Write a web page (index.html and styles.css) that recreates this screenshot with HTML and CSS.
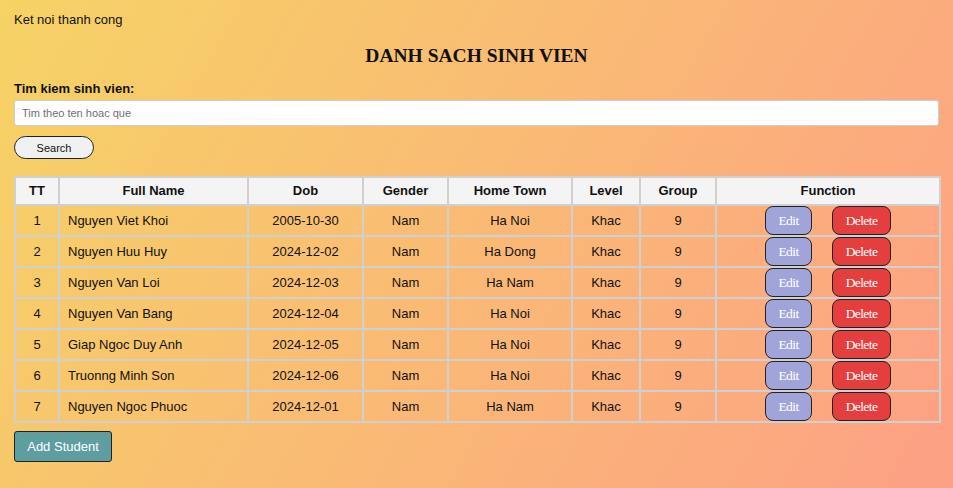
FILE: index.html
```html
<!DOCTYPE html>
<html lang="vi">
<head>
<meta charset="utf-8">
<title>Danh sach sinh vien</title>
<link rel="stylesheet" href="styles.css">
</head>
<body>
<div class="status">Ket noi thanh cong</div>
<h2 class="title">DANH SACH SINH VIEN</h2>
<form class="search">
  <label class="search-label" for="q">Tim kiem sinh vien:</label>
  <input class="search-input" id="q" type="text" placeholder="Tim theo ten hoac que">
  <button class="search-btn" type="button">Search</button>
</form>
<table class="students">
  <colgroup>
    <col class="c-tt"><col class="c-name"><col class="c-dob"><col class="c-gender"><col class="c-town"><col class="c-level"><col class="c-group"><col class="c-func">
  </colgroup>
  <thead>
    <tr><th>TT</th><th>Full Name</th><th>Dob</th><th>Gender</th><th>Home Town</th><th>Level</th><th>Group</th><th>Function</th></tr>
  </thead>
  <tbody>
    <tr><td>1</td><td class="name">Nguyen Viet Khoi</td><td>2005-10-30</td><td>Nam</td><td>Ha Noi</td><td>Khac</td><td>9</td><td class="fn"><button class="btn-edit">Edit</button><button class="btn-del">Delete</button></td></tr>
    <tr><td>2</td><td class="name">Nguyen Huu Huy</td><td>2024-12-02</td><td>Nam</td><td>Ha Dong</td><td>Khac</td><td>9</td><td class="fn"><button class="btn-edit">Edit</button><button class="btn-del">Delete</button></td></tr>
    <tr><td>3</td><td class="name">Nguyen Van Loi</td><td>2024-12-03</td><td>Nam</td><td>Ha Nam</td><td>Khac</td><td>9</td><td class="fn"><button class="btn-edit">Edit</button><button class="btn-del">Delete</button></td></tr>
    <tr><td>4</td><td class="name">Nguyen Van Bang</td><td>2024-12-04</td><td>Nam</td><td>Ha Noi</td><td>Khac</td><td>9</td><td class="fn"><button class="btn-edit">Edit</button><button class="btn-del">Delete</button></td></tr>
    <tr><td>5</td><td class="name">Giap Ngoc Duy Anh</td><td>2024-12-05</td><td>Nam</td><td>Ha Noi</td><td>Khac</td><td>9</td><td class="fn"><button class="btn-edit">Edit</button><button class="btn-del">Delete</button></td></tr>
    <tr><td>6</td><td class="name">Truonng Minh Son</td><td>2024-12-06</td><td>Nam</td><td>Ha Noi</td><td>Khac</td><td>9</td><td class="fn"><button class="btn-edit">Edit</button><button class="btn-del">Delete</button></td></tr>
    <tr><td>7</td><td class="name">Nguyen Ngoc Phuoc</td><td>2024-12-01</td><td>Nam</td><td>Ha Nam</td><td>Khac</td><td>9</td><td class="fn"><button class="btn-edit">Edit</button><button class="btn-del">Delete</button></td></tr>
  </tbody>
</table>
<button class="add-btn" type="button">Add Student</button>
</body>
</html>
```
FILE: styles.css
```css
html {
  height: 100%;
}
body {
  margin: 0;
  min-height: 100%;
  box-sizing: border-box;
  padding: 12px 14px;
  font-family: "Liberation Sans", Arial, sans-serif;
  font-size: 13px;
  color: #111;
  background: linear-gradient(120deg, #f6d365 0%, #fda085 100%);
}
.status {
  line-height: 16px;
}
.title {
  font-family: "Liberation Serif", "Times New Roman", serif;
  font-size: 19.5px;
  font-weight: bold;
  text-align: center;
  margin: 17px 0 0;
  line-height: 22px;
}
.search {
  display: flex;
  flex-direction: column;
  align-items: flex-start;
  margin-top: 14px;
}
.search-label {
  font-weight: bold;
  line-height: 15px;
}
.search-input {
  box-sizing: border-box;
  width: 100%;
  height: 26px;
  margin-top: 4px;
  padding: 0 7px;
  border: 1px solid #cfcfcf;
  border-radius: 3px;
  background: #fff;
  font-family: "Liberation Sans", Arial, sans-serif;
  font-size: 11px;
  color: #333;
}
.search-input::placeholder {
  color: #6f6f6f;
}
.search-btn {
  box-sizing: border-box;
  margin-top: 10px;
  width: 80px;
  height: 23px;
  border: 1px solid #222;
  border-radius: 12px;
  background: #f0f0f0;
  font-family: "Liberation Sans", Arial, sans-serif;
  font-size: 11px;
  color: #111;
  padding: 0;
}
.students {
  width: 100%;
  margin-top: 17px;
  border-collapse: collapse;
  table-layout: fixed;
  border: 2px solid #d0d0d0;
}
.c-tt { width: 44px; }
.c-name { width: 189px; }
.c-dob { width: 115px; }
.c-gender { width: 85px; }
.c-town { width: 124px; }
.c-level { width: 68px; }
.c-group { width: 76px; }
.c-func { width: 224px; }
.students th,
.students td {
  border: 2px solid #d0d0d0;
  text-align: center;
  font-size: 13px;
}
.students th {
  background: #f4f4f4;
  font-weight: bold;
  padding: 5px 8px;
  line-height: 16px;
}
.students td {
  padding: 0 8px;
  height: 29px;
  line-height: 16px;
}
.students td.name {
  text-align: left;
}
.fn button {
  box-sizing: border-box;
  height: 29px;
  margin: 0 10px;
  padding: 0;
  border: 1px solid #222;
  border-radius: 8px;
  font-family: "Liberation Serif", "Times New Roman", serif;
  font-size: 13.5px;
  letter-spacing: -0.6px;
  color: #fff;
  vertical-align: middle;
}
.btn-edit {
  width: 47px;
  background: #a0a4d8;
}
.btn-del {
  width: 59px;
  background: #e53e3e;
}
.add-btn {
  box-sizing: border-box;
  margin-top: 8px;
  width: 98px;
  height: 31px;
  padding: 0;
  border: 1px solid #222;
  border-radius: 3px;
  background: #5f9ea0;
  color: #fff;
  font-family: "Liberation Sans", Arial, sans-serif;
  font-size: 13px;
}
```
